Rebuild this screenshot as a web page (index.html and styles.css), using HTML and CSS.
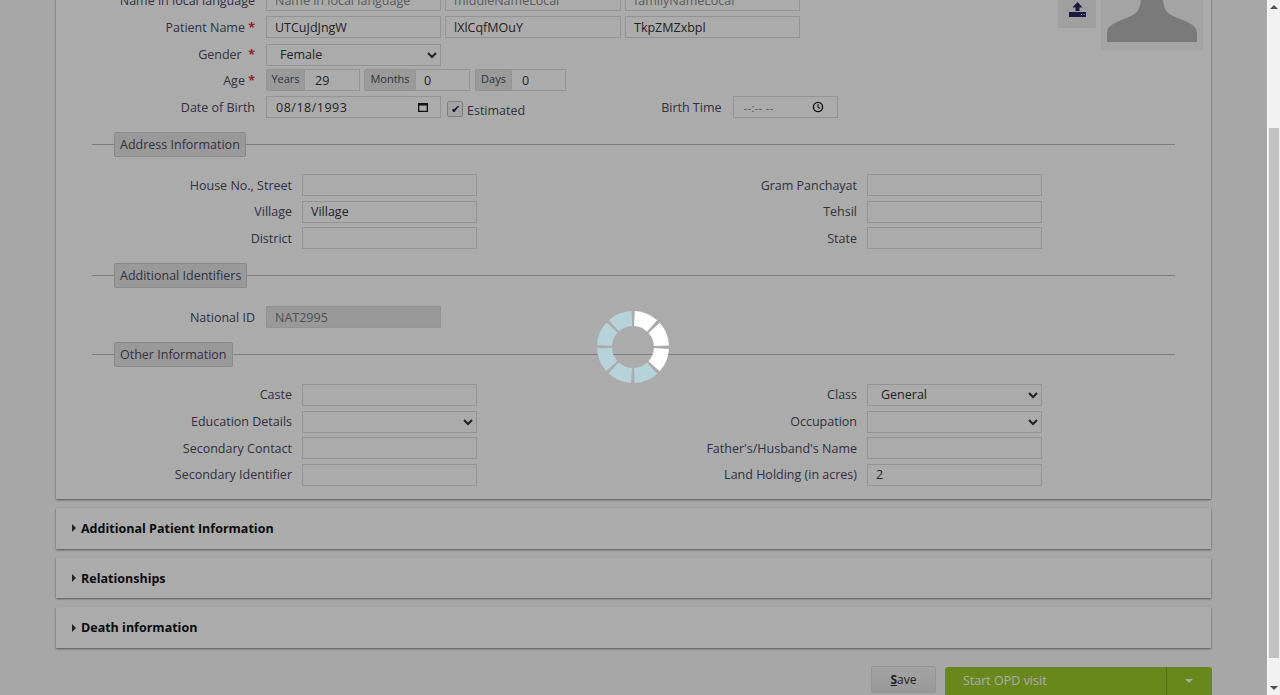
FILE: index.html
```html
<!DOCTYPE html>
<html lang="en">
<head>
  <meta charset="UTF-8">
  <title>Patient Registration</title>
  <link rel="stylesheet" href="styles.css">
</head>
<body>
  <div class="viewport">
    <div class="page">
      <div class="panel main-panel">
        <div class="photo-col">
          <div class="upload-btn">
            <svg width="17" height="15" viewBox="0 0 17 15"><path d="M8.5 0 L13.5 5.5 H10.5 V9 H6.5 V5.5 H3.5 Z M0 10 H17 V15 H0 Z M12 12 V13 H13 V12 Z M14.5 12 V13 H15.5 V12 Z" fill="#282468" fill-rule="evenodd"/></svg>
          </div>
          <div class="photo">
            <svg width="90" height="70" viewBox="0 0 90 70"><path d="M0 70 V60 C1 52 12 49 24 44 C31 41 33 36 34 28 V0 H56 V28 C57 36 59 41 66 44 C78 49 89 52 90 60 V70 Z" fill="#b6b6b6"/></svg>
          </div>
        </div>

        <div class="row name-row">
          <label class="lbl lbl-main">Name in local language</label>
          <input class="inp w175 muted" value="Name in local language">
          <input class="inp w176 muted" value="middleNameLocal">
          <input class="inp w175 muted" value="familyNameLocal">
        </div>
        <div class="row name-row">
          <label class="lbl lbl-main">Patient Name <span class="req">*</span></label>
          <input class="inp w175" value="UTCuJdJngW">
          <input class="inp w176" value="lXlCqfMOuY">
          <input class="inp w175" value="TkpZMZxbpl">
        </div>
        <div class="row gender-row">
          <label class="lbl lbl-main">Gender&nbsp; <span class="req">*</span></label>
          <select class="inp w175 sel"><option>Female</option></select>
        </div>
        <div class="row">
          <label class="lbl lbl-main">Age <span class="req">*</span></label>
          <div class="age-group">
            <span class="addon addon-years">Years</span><input class="inp age-years" value="29">
          </div>
          <div class="age-group">
            <span class="addon addon-months">Months</span><input class="inp age-months" value="0">
          </div>
          <div class="age-group days-group">
            <span class="addon addon-days">Days</span><input class="inp age-days" value="0">
          </div>
        </div>
        <div class="row dob-row">
          <label class="lbl lbl-main">Date of Birth</label>
          <div class="inp w175 fake-date">08/18/1993
            <svg width="12" height="12" viewBox="0 0 12 12"><path d="M1 2 H11 V11 H1 Z M2.3 4.5 V9.7 H9.7 V4.5 Z" fill="#1a1a1a" fill-rule="evenodd"/></svg>
          </div>
          <span class="check-box">&#10004;</span>
          <span class="check-label">Estimated</span>
          <label class="lbl birth-label">Birth Time</label>
          <div class="inp fake-time"><span>--:-- --</span>
            <svg width="12" height="12" viewBox="0 0 12 12"><circle cx="6" cy="6" r="4.6" fill="none" stroke="#1a1a1a" stroke-width="1.4"/><path d="M6 3 V6.3 L8 7.5" fill="none" stroke="#1a1a1a" stroke-width="1.1"/></svg>
          </div>
        </div>

        <div class="legend-row address-legend"><span class="legend">Address Information</span></div>
        <div class="two-col">
          <div class="row"><label class="lbl lbl-left">House No., Street</label><input class="inp w175"></div>
          <div class="row"><label class="lbl lbl-right">Gram Panchayat</label><input class="inp w175"></div>
          <div class="row"><label class="lbl lbl-left">Village</label><input class="inp w175" value="Village"></div>
          <div class="row"><label class="lbl lbl-right">Tehsil</label><input class="inp w175"></div>
          <div class="row"><label class="lbl lbl-left">District</label><input class="inp w175"></div>
          <div class="row"><label class="lbl lbl-right">State</label><input class="inp w175"></div>
        </div>

        <div class="legend-row ident-legend"><span class="legend">Additional Identifiers</span></div>
        <div class="row national-row">
          <label class="lbl lbl-main">National ID</label>
          <input class="inp w175 disabled" value="NAT2995">
        </div>

        <div class="legend-row other-legend"><span class="legend">Other Information</span></div>
        <div class="two-col">
          <div class="row"><label class="lbl lbl-left">Caste</label><input class="inp w175"></div>
          <div class="row"><label class="lbl lbl-right">Class</label><select class="inp w175 sel"><option>General</option></select></div>
          <div class="row"><label class="lbl lbl-left">Education Details</label><select class="inp w175 sel"><option></option></select></div>
          <div class="row"><label class="lbl lbl-right">Occupation</label><select class="inp w175 sel"><option></option></select></div>
          <div class="row"><label class="lbl lbl-left">Secondary Contact</label><input class="inp w175"></div>
          <div class="row"><label class="lbl lbl-right">Father's/Husband's Name</label><input class="inp w175"></div>
          <div class="row"><label class="lbl lbl-left">Secondary Identifier</label><input class="inp w175"></div>
          <div class="row"><label class="lbl lbl-right">Land Holding (in acres)</label><input class="inp w175" value="2"></div>
        </div>
      </div>

      <div class="panel fold"><span class="caret"></span>Additional Patient Information</div>
      <div class="panel fold"><span class="caret"></span>Relationships</div>
      <div class="panel fold"><span class="caret"></span>Death information</div>

      <div class="actions">
        <button class="save-btn"><u>S</u>ave</button>
        <div class="split-btn">
          <span class="split-main">Start OPD visit</span>
          <span class="split-arrow"></span>
        </div>
      </div>
    </div>
    <div class="scrollbar">
      <span class="arrow-up"></span>
      <div class="thumb"></div>
      <span class="arrow-down"></span>
    </div>
  </div>

  <div class="overlay">
    <svg width="76" height="76" viewBox="-38 -38 76 76" class="spinner">
      <circle r="28.5" fill="none" stroke="#fff" stroke-width="15" stroke-dasharray="19.6 2.8 19.6 2.8 19.6 114.6" transform="rotate(-87.2)"/>
      <circle r="28.5" fill="none" stroke="#b5d3d9" stroke-width="15" stroke-dasharray="19.6 2.8 19.6 2.8 19.6 2.8 19.6 2.8 19.6 69.8" transform="rotate(47.8)"/>
    </svg>
  </div>
</body>
</html>
```

FILE: styles.css
```css
* {
  box-sizing: border-box;
}

html, body {
  height: 100%;
  margin: 0;
  overflow: hidden;
}

body {
  font-family: "Open Sans", "Noto Sans", sans-serif;
  font-size: 12.5px;
  color: #333;
  background-color: #fafafa;
}

.viewport {
  display: flex;
  height: 695px;
  overflow: hidden;
}

.page {
  width: 1267px;
  padding: 0 56px;
  margin-top: -16px;
}

.panel {
  background-color: #fff;
  box-shadow: 0 1px 2px rgba(0, 0, 0, 0.5);
}

.main-panel {
  height: 515px;
  padding-top: 3px;
  position: relative;
}

.row {
  display: flex;
  align-items: center;
  gap: 4px;
  height: 26.7px;
}

.gender-row {
  margin-top: 1px;
  margin-bottom: -1px;
}

.lbl {
  color: #4a4a60;
  text-align: right;
  white-space: nowrap;
}

.lbl-main {
  width: 199px;
  margin-right: 7px;
}

.lbl-left {
  width: 236px;
  margin-right: 6px;
}

.lbl-right {
  width: 0;
  flex: 1;
  margin-right: 6px;
}

.req {
  color: #d33;
  font-weight: bold;
}

.inp {
  height: 22px;
  border: 1px solid #dcdcdc;
  background-color: #fff;
  font: 12.5px "Open Sans", sans-serif;
  color: #333;
  padding: 0 8px;
  border-radius: 0;
  outline: none;
}

.w175 {
  width: 175px;
  flex: none;
}

.w176 {
  width: 176px;
  flex: none;
}

.muted {
  color: #888;
}

.sel {
  padding-left: 9px;
}

.disabled {
  background-color: #e4e4e4;
  color: #777;
}

.age-group {
  display: flex;
}

.days-group {
  margin-left: 1px;
}

.addon {
  background-color: #e6e6e6;
  border: 1px solid #ddd;
  border-radius: 2px 0 0 2px;
  font-size: 11px;
  line-height: 18px;
  height: 22px;
  text-align: center;
  color: #4a4a60;
}

.addon-years {
  width: 39px;
}

.addon-months {
  width: 52px;
}

.addon-days {
  width: 37px;
}

.age-years {
  width: 55px;
  border-left: 0;
  padding-left: 10px;
}

.age-months {
  width: 54px;
  border-left: 0;
}

.age-days {
  width: 54px;
  border-left: 0;
  padding-left: 10px;
}

.fake-date {
  display: flex;
  align-items: center;
  justify-content: space-between;
  letter-spacing: 0.5px;
  padding: 0 11px 0 9px;
}

.check-box {
  width: 16px;
  height: 16px;
  margin-left: 2px;
  margin-top: 4px;
  border: 1px solid #bbb;
  border-radius: 2px;
  background-color: #f5f5f5;
  font-size: 11px;
  line-height: 14px;
  text-align: center;
  color: #1c1a4d;
}

.check-label {
  color: #4a4a60;
  margin-top: 6px;
}

.birth-label {
  margin-left: 132px;
  margin-right: 7px;
}

.fake-time {
  width: 105px;
  display: flex;
  align-items: center;
  justify-content: space-between;
  padding: 0 13px 0 10px;
  color: #777;
  font-size: 11px;
  letter-spacing: 0.4px;
}

.photo-col {
  position: absolute;
  top: 0;
  right: 8px;
  display: flex;
  align-items: flex-start;
  gap: 5px;
}

.upload-btn {
  width: 38px;
  height: 44px;
  background-color: #eee;
  border-radius: 2px;
  display: flex;
  align-items: flex-end;
  justify-content: center;
  padding-bottom: 11px;
}

.photo {
  width: 102px;
  height: 66px;
  padding: 0 6px 8px;
  background-color: #f5f5f5;
  display: flex;
  align-items: flex-end;
  justify-content: center;
}

.legend-row {
  margin: 0 36px;
  background: linear-gradient(#bbb, #bbb) center / 100% 1px no-repeat;
  padding-left: 22px;
  display: flex;
  align-items: center;
}

.address-legend {
  margin-top: 11.5px;
}

.ident-legend {
  margin-top: 11.3px;
}

.other-legend {
  margin-top: 12.7px;
  margin-bottom: 3px;
}

.legend {
  background-color: #e5e5e5;
  border: 1px solid #ccc;
  border-radius: 2px;
  color: #4a4a60;
  padding: 0 5px;
  line-height: 23px;
  height: 25px;
}

.two-col {
  display: grid;
  grid-template-columns: 421px 565px;
  margin-top: 14.8px;
}

.national-row {
  margin-top: 17px;
  height: 24px;
}

.fold {
  display: flex;
  align-items: center;
  height: 40.7px;
  margin-top: 9px;
  padding-left: 16px;
  font-weight: bold;
  color: #111;
}

.caret {
  width: 0;
  height: 0;
  border-left: 4px solid #333;
  border-top: 4px solid transparent;
  border-bottom: 4px solid transparent;
  margin-right: 5px;
}

.actions {
  display: flex;
  justify-content: flex-end;
  align-items: flex-start;
  gap: 9px;
  margin-top: 18px;
  margin-right: -1px;
}

.save-btn {
  width: 65px;
  height: 27px;
  border: 1px solid #ddd;
  border-radius: 2px;
  background: linear-gradient(#f4f4f4, #e4e4e4);
  font: 12px "Open Sans", sans-serif;
  color: #333;
}

.save-btn u {
  font-weight: bold;
}

.split-btn {
  display: flex;
  width: 267px;
  height: 30px;
  margin-top: 1px;
  border-radius: 3px;
  background-color: #9ccb2a;
  color: #fff;
}

.split-main {
  flex: 1;
  padding-left: 18px;
  line-height: 27px;
  border-right: 1px solid #78a52d;
}

.split-arrow {
  width: 45px;
  position: relative;
}

.split-arrow::after {
  content: "";
  position: absolute;
  left: 18px;
  top: 12px;
  border-top: 4px solid #fff;
  border-left: 4px solid transparent;
  border-right: 4px solid transparent;
}

.scrollbar {
  width: 13px;
  background-color: #f1f1f1;
  border-left: 1px solid #fafafa;
  position: relative;
  display: flex;
  flex-direction: column;
  justify-content: space-between;
  align-items: center;
}

.thumb {
  position: absolute;
  left: 1px;
  right: 1px;
  top: 128px;
  bottom: 37px;
  background-color: #c1c1c1;
}

.arrow-up {
  margin-top: 5px;
  border-bottom: 4px solid #505050;
  border-left: 4px solid transparent;
  border-right: 4px solid transparent;
}

.arrow-down {
  margin-bottom: 5px;
  border-top: 4px solid #505050;
  border-left: 4px solid transparent;
  border-right: 4px solid transparent;
}

.overlay {
  position: fixed;
  top: 0;
  left: 0;
  width: 1267px;
  height: 695px;
  background-color: rgba(0, 0, 0, 0.33);
}

.spinner {
  position: absolute;
  left: 595px;
  top: 309px;
}
```
